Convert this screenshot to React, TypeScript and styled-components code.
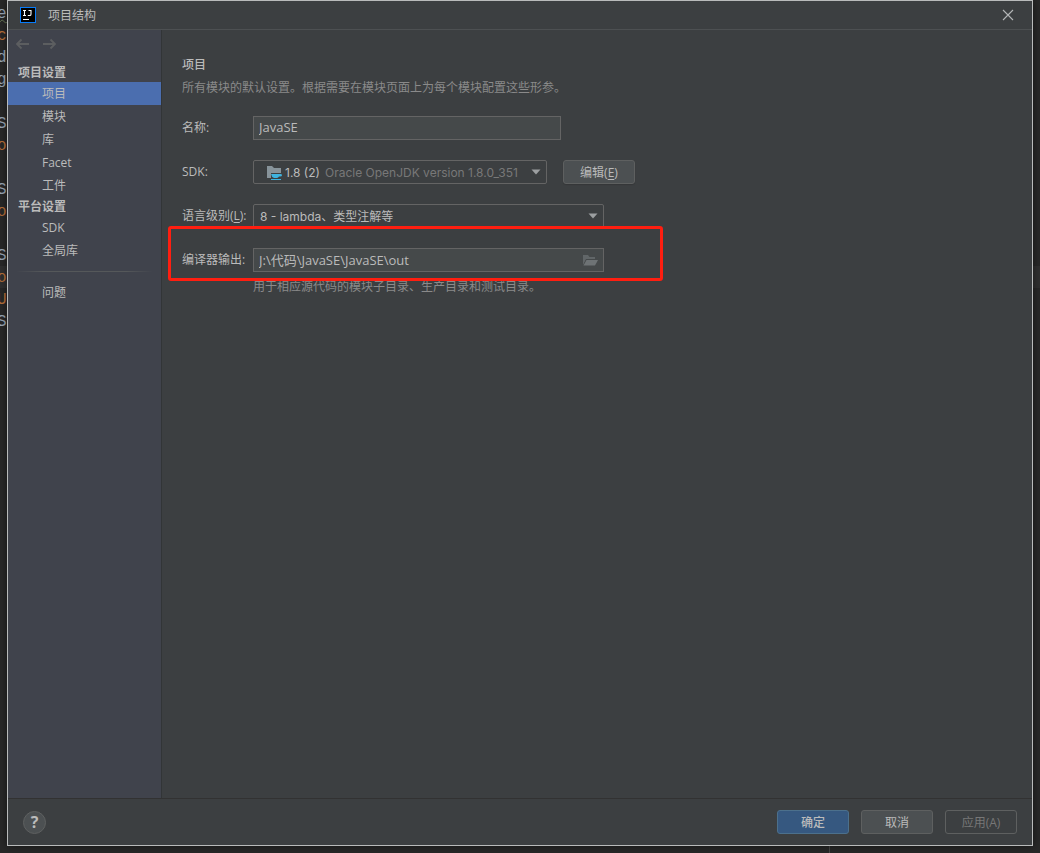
import React from "react";
import styled, { createGlobalStyle, css } from "styled-components";

const Global = createGlobalStyle`
  *, *::before, *::after { box-sizing: border-box; }
  html, body, #root { height: 100%; }
  body {
    margin: 0;
    overflow: hidden;
    background: #282828;
    color: #bbbbbb;
    font: 12px/16px "Open Sans", "Noto Sans CJK SC", sans-serif;
  }
  button, input, select { font: inherit; color: inherit; margin: 0; }
  u { text-underline-offset: 2px; }
`;

const Desktop = styled.div`
  position: relative;
  height: 100%;
  padding: 0 7px 7px;
  display: flex;
`;

const EditorCode = styled.pre`
  position: absolute;
  inset: 0;
  margin: 0;
  padding-top: 2px;
  overflow: hidden;
  font: 16px/22px "Liberation Mono", monospace;
  color: #9aa7b6;
`;

const CodeLine = styled.span<{ $tone?: string; $current?: boolean; $typo?: boolean }>`
  display: block;
  height: 22px;
  padding-top: 1px;
  text-indent: -3px;
  color: ${(p) => p.$tone ?? "inherit"};
  background: ${(p) => (p.$current ? "#303030" : "transparent")};
  text-decoration: ${(p) => (p.$typo ? "underline wavy #6a7a58 1px" : "none")};
`;

const PaneDivider = styled.div`
  position: absolute;
  bottom: 0;
  left: 829px;
  width: 1px;
  height: 7px;
  background: #484848;
`;

const Dialog = styled.section`
  position: relative;
  flex: 1;
  min-width: 0;
  display: flex;
  flex-direction: column;
  border: 1px solid #b9bbbb;
  background: #3c3f41;
  box-shadow: 0 0 8px rgba(0, 0, 0, 0.5);
`;

const TitleBar = styled.header`
  display: flex;
  align-items: center;
  height: 29px;
  padding: 0 18px 0 12px;
  border-bottom: 1px solid #4d5052;
`;

const Title = styled.h1`
  flex: 1;
  margin: 0 0 0 12px;
  padding-top: 2px;
  font-size: 12px;
  font-weight: 400;
`;

const IconButton = styled.button`
  display: flex;
  padding: 0;
  border: 0;
  background: none;
`;

const Body = styled.div`
  flex: 1;
  min-height: 0;
  display: flex;
`;

const Sidebar = styled.nav`
  width: 154px;
  border-right: 1px solid #323537;
  background: #40434c;
`;

const History = styled.div`
  display: flex;
  gap: 12px;
  padding: 6px 7px 0;
  height: 33px;
`;

const GroupTitle = styled.h2`
  margin: 0;
  padding-left: 10px;
  font-size: 12px;
  line-height: 19px;
  font-weight: 700;
`;

const NavList = styled.ul`
  margin: 0;
  padding: 0;
  list-style: none;
`;

const NavLink = styled.a<{ $active?: boolean }>`
  display: block;
  padding-left: 34px;
  line-height: 23px;
  color: #bbbbbb;
  text-decoration: none;
  background: ${(p) => (p.$active ? "#4b6eaf" : "transparent")};
`;

const Separator = styled.hr`
  height: 1px;
  margin: 9px 8px;
  border: 0;
  background: linear-gradient(90deg, transparent, #55585a 20%, #55585a 80%, transparent);
`;

const Content = styled.main`
  flex: 1;
  min-width: 0;
  padding: 27px 20px;
`;

const Heading = styled.h2`
  margin: 0;
  font-size: 12px;
  line-height: 16px;
  font-weight: 500;
`;

const Description = styled.p`
  margin: 7px 0 20px;
  color: #8a8a8a;
`;

const Form = styled.form`
  display: flex;
  flex-direction: column;
  gap: 20px;
`;

const Field = styled.div`
  position: relative;
  display: grid;
  grid-template-columns: 71px minmax(0, auto) auto;
  justify-content: start;
  align-items: center;
`;

const frame = css`
  width: 100%;
  height: 24px;
  border: 1px solid #646464;
  outline: 0;
`;

const Control = styled.div<{ $width: number }>`
  position: relative;
  width: ${(p) => p.$width}px;
  max-width: 100%;
  display: flex;
  align-items: center;
`;

const TextInput = styled.input`
  ${frame}
  padding: 0 24px 2px 5px;
  background: #45494a;
  font-size: 13px;
`;

const Select = styled.select<{ $indent: number }>`
  ${frame}
  appearance: none;
  padding: 1px 24px 0 ${(p) => p.$indent}px;
  border-radius: 2px;
  background: transparent;
  font-family: Inter, "Noto Sans CJK SC", sans-serif;
`;

const SelectIcon = styled.span`
  position: absolute;
  left: 13px;
  display: flex;
  pointer-events: none;
`;

const Version = styled.span`
  position: absolute;
  left: 72px;
  padding-top: 1px;
  font-family: Inter, sans-serif;
  color: #787878;
  white-space: nowrap;
  pointer-events: none;
`;

const TrailingIcon = styled.span`
  position: absolute;
  right: 6px;
  display: flex;
  pointer-events: none;
`;

const Button = styled.button<{ $kind?: "primary" | "disabled" }>`
  width: 72px;
  height: 24px;
  padding: 2px 0 0;
  border: 1px solid #5e6060;
  border-radius: 3px;
  background: #4c5052;
  ${(p) => p.$kind === "primary" && css`
    border-color: #4c708c;
    background: #365880;
    font-weight: 500;
  `}
  ${(p) => p.$kind === "disabled" && css`
    background: transparent;
    color: #777777;
  `}
`;

const EditButton = styled(Button)`
  margin-left: 16px;
  box-shadow: 0 1px 1px #353739;
`;

const Hint = styled.p`
  margin: -13px 0 0 71px;
  color: #8a8a8a;
`;

const Highlight = styled.div`
  position: absolute;
  top: -22px;
  left: -14px;
  width: 495px;
  height: 55px;
  border: 3px solid #ff1e10;
  border-radius: 3px;
  pointer-events: none;
  z-index: 1;
`;

const Footer = styled.footer`
  display: flex;
  align-items: center;
  gap: 12px;
  height: 47px;
  padding: 0 15px;
  border-top: 1px solid #323232;
`;

const HelpButton = styled.button`
  width: 23px;
  height: 23px;
  margin-right: auto;
  padding: 0;
  border: 1px solid #5e6060;
  border-radius: 50%;
  background: #4c5052;
  font: 700 16px/20px "Open Sans", sans-serif;
`;

const AppLogo = () => (
  <svg width="16" height="16" viewBox="0 0 16 16" aria-hidden="true">
    <rect x=".5" y=".5" width="15" height="15" fill="#000" stroke="#087cfa" />
    <path d="M3 3.500h3M4.500 3.500v5M3 8.500h3M8.500 3.500h2.500v3.700q0 1.300-1.300 1.300H7.800M3 12.500h6" fill="none" stroke="#fff" strokeWidth="1.1" />
  </svg>
);

const CloseIcon = () => (
  <svg width="12" height="12" viewBox="0 0 12 12" aria-hidden="true">
    <path d="M1 1l10 10M11 1L1 11" stroke="#b4b6b7" strokeWidth="1.1" />
  </svg>
);

const Arrow = ({ forward }: { forward?: boolean }) => (
  <svg width="15" height="16" viewBox="0 0 15 16" aria-hidden="true">
    <path
      d={forward ? "M1 8h12M8.500 3.500L13 8l-4.500 4.500" : "M14 8H2M6.500 3.500L2 8l4.500 4.500"}
      fill="none"
      stroke="#5c5e60"
      strokeWidth="1.8"
    />
  </svg>
);

const Caret = () => (
  <svg width="10" height="6" viewBox="0 0 10 6" aria-hidden="true">
    <path d="M.5 .5h9L5 5.500z" fill="#9c9fa1" />
  </svg>
);

const SdkIcon = () => (
  <svg width="16" height="16" viewBox="0 0 16 16" aria-hidden="true">
    <path d="M1 2h5l2 2h7v5H5v5H1z" fill="#87939a" />
    <path d="M5 10h9.500q1.500 0 1.500 1.200T14 12.500h-1q-.8 1-2 1.500H8Q5.500 13 5 10zM5 15h10v1H5z" fill="#3fb4e0" />
  </svg>
);

const FolderIcon = () => (
  <svg width="16" height="16" viewBox="0 0 16 16" aria-hidden="true">
    <path d="M1 13V3h5l1.500 2H13v2H4z" fill="#616668" />
    <path d="M4.500 8H16l-3 5.500H1.500z" fill="#6e7375" />
  </svg>
);

const ORANGE = "#b8703a";
const codeLines: { text: string; tone?: string; current?: boolean; typo?: boolean }[] = [
  { text: "er", typo: true },
  { text: "c", tone: ORANGE },
  { text: "de" },
  { text: "gr" },
  { text: " " },
  { text: "Sy" },
  { text: "or", tone: ORANGE },
  { text: " " },
  { text: "Sy" },
  { text: "or", tone: ORANGE },
  { text: " " },
  { text: "Sy" },
  { text: "or", tone: ORANGE, current: true },
  { text: "UT", tone: ORANGE },
  { text: "Sy" },
];

const NavItems = ({ items, active }: { items: string[]; active?: string }) => (
  <NavList>
    {items.map((item) => (
      <li key={item}>
        <NavLink href="#" $active={item === active} aria-current={item === active ? "page" : undefined}>
          {item}
        </NavLink>
      </li>
    ))}
  </NavList>
);

export default function App() {
  return (
    <>
      <Global />
      <Desktop>
        <EditorCode aria-hidden="true">
          {codeLines.map((line, i) => (
            <CodeLine key={i} $tone={line.tone} $current={line.current} $typo={line.typo}>{line.text}</CodeLine>
          ))}
        </EditorCode>
        <PaneDivider />
        <Dialog role="dialog" aria-labelledby="dialog-title">
          <TitleBar>
            <AppLogo />
            <Title id="dialog-title">项目结构</Title>
            <IconButton type="button" aria-label="关闭"><CloseIcon /></IconButton>
          </TitleBar>
          <Body>
            <Sidebar>
              <History>
                <IconButton type="button" aria-label="后退" disabled><Arrow /></IconButton>
                <IconButton type="button" aria-label="前进" disabled><Arrow forward /></IconButton>
              </History>
              <GroupTitle>项目设置</GroupTitle>
              <NavItems items={["项目", "模块", "库", "Facet", "工件"]} active="项目" />
              <GroupTitle>平台设置</GroupTitle>
              <NavItems items={["SDK", "全局库"]} />
              <Separator />
              <NavItems items={["问题"]} />
            </Sidebar>
            <Content>
              <Heading>项目</Heading>
              <Description>所有模块的默认设置。根据需要在模块页面上为每个模块配置这些形参。</Description>
              <Form onSubmit={(e) => e.preventDefault()}>
                <Field>
                  <label htmlFor="name">名称:</label>
                  <Control $width={308}><TextInput id="name" defaultValue="JavaSE" /></Control>
                </Field>
                <Field>
                  <label htmlFor="sdk">SDK:</label>
                  <Control $width={294}>
                    <SelectIcon><SdkIcon /></SelectIcon>
                    <Select id="sdk" $indent={31}><option>1.8 (2)</option></Select>
                    <Version>Oracle OpenJDK version 1.8.0_351</Version>
                    <TrailingIcon><Caret /></TrailingIcon>
                  </Control>
                  <EditButton type="button">编辑(<u>E</u>)</EditButton>
                </Field>
                <Field>
                  <label htmlFor="level">语言级别(<u>L</u>):</label>
                  <Control $width={351}>
                    <Select id="level" $indent={6}><option>8 - lambda、类型注解等</option></Select>
                    <TrailingIcon><Caret /></TrailingIcon>
                  </Control>
                </Field>
                <Field>
                  <label htmlFor="output">编译器输出:</label>
                  <Control $width={351}>
                    <TextInput id="output" defaultValue="J:\代码\JavaSE\JavaSE\out" />
                    <TrailingIcon><FolderIcon /></TrailingIcon>
                  </Control>
                  <Highlight />
                </Field>
                <Hint>用于相应源代码的模块子目录、生产目录和测试目录。</Hint>
              </Form>
            </Content>
          </Body>
          <Footer>
            <HelpButton type="button" aria-label="帮助">?</HelpButton>
            <Button type="button" $kind="primary">确定</Button>
            <Button type="button">取消</Button>
            <Button type="button" $kind="disabled" disabled>应用(A)</Button>
          </Footer>
        </Dialog>
      </Desktop>
    </>
  );
}
